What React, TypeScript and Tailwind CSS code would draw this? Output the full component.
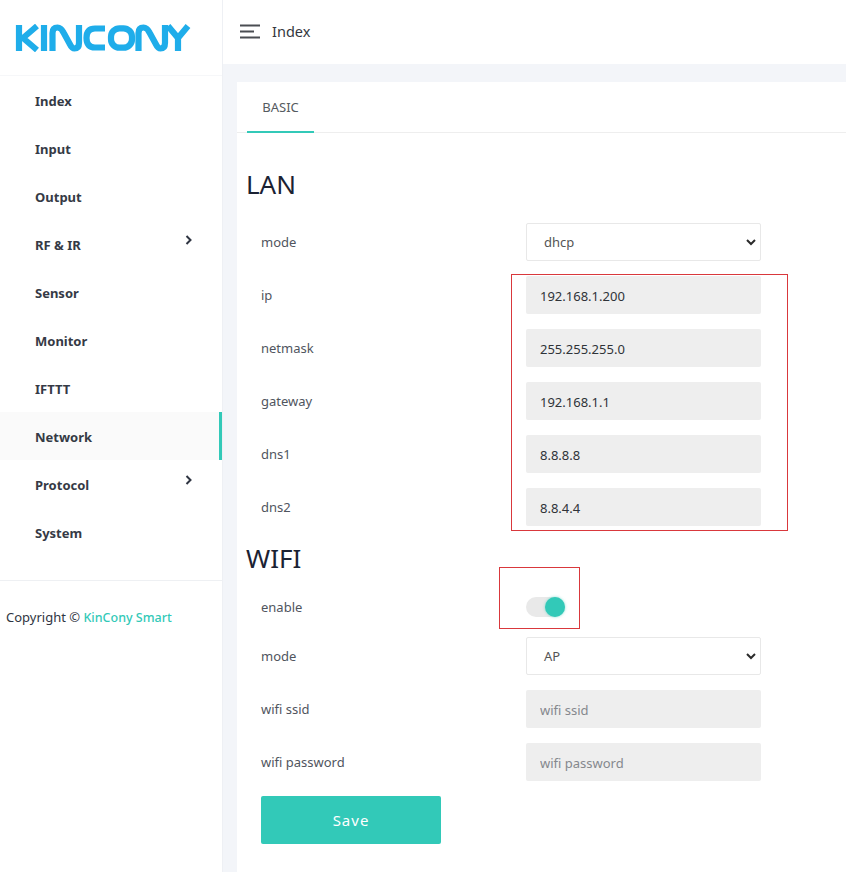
const font = "font-['Noto_Sans','Open_Sans',sans-serif]";

function Logo() {
  return (
    <svg width="176" height="28" viewBox="0 0 176 28" fill="none" stroke="#1fadea" strokeWidth="6.200" strokeLinecap="butt" strokeLinejoin="round">
      <path d="M4 1v26" />
      <path d="M22 2 8 14l14 12" strokeWidth="6" />
      <path d="M29 1v26" />
      <path d="M37.500 27V9q0-5.500 5-5.500c3 0 4.500 2 6 5l6 11c1.500 3 3 5 5 5q4.500 0 4.500-5.500V1" />
      <path d="M90 4.500H80q-8.500 0-8.500 9.500t8.500 9.500h10" />
      <rect x="96" y="4.300" width="21" height="19.400" rx="8.500" />
      <path d="M123.500 27V9q0-5.500 5-5.500c3 0 4.500 2 6 5l6 11c1.500 3 3 5 5 5q4.500 0 4.500-5.500V1" />
      <path d="M153 2l10 12 10-12M163 13v14" />
    </svg>
  );
}

function Chevron() {
  return (
    <svg width="8" height="10" viewBox="0 0 8 10" fill="none" stroke="#2f3542" strokeWidth="2" className="mt-[-9px] mr-[29px]">
      <path d="M1.500 1l4 4-4 4" />
    </svg>
  );
}

const nav = ["Index", "Input", "Output", "RF & IR", "Sensor", "Monitor", "IFTTT", "Network", "Protocol", "System"];

function Sidebar() {
  return (
    <aside className="w-[223px] shrink-0 bg-white border-r border-[#eef0f4] min-h-[872px]">
      <div className="h-[76px] border-b border-[#f6f7f9] pl-[15px] pt-[24px]">
        <Logo />
      </div>
      <nav className="pb-[24px] border-b border-[#eef0f3]">
        {nav.map((n) => {
          const active = n === "Network";
          const sub = n === "RF & IR" || n === "Protocol";
          return (
            <div key={n} className={`h-[48px] pl-[35px] flex items-center justify-between text-[13px] font-bold text-[#353a45] ${active ? "bg-[#fafafa] border-r-[3px] border-[#32c9b8]" : ""}`}>
              <span className="pt-[4px]">{n}</span>
              {sub && <Chevron />}
            </div>
          );
        })}
      </nav>
      <p className="pl-[6px] pt-[27px] text-[13px] leading-[18px] text-[#2f3542]">
        Copyright © <span className="text-[#32c9b8] font-medium text-[12.500px]">KinCony Smart</span>
      </p>
    </aside>
  );
}

function Label({ children }: { children: React.ReactNode }) {
  return <span className="w-[280px] shrink-0 pl-[15px] pt-[2px] text-[13px] text-[#50555e]">{children}</span>;
}

function Row({ label, children }: { label: string; children: React.ReactNode }) {
  return (
    <div className="flex items-center h-[53px]">
      <Label>{label}</Label>
      {children}
    </div>
  );
}

function Field({ value, placeholder }: { value?: string; placeholder?: string }) {
  return (
    <input
      readOnly
      value={value}
      placeholder={placeholder}
      className="w-[235px] h-[38px] rounded-[2px] bg-[#eeeeee] pl-[14px] pt-[2px] text-[13px] text-[#2f3338] placeholder:text-[#85888d] outline-none"
    />
  );
}

function Select({ value }: { value: string }) {
  return (
    <div className="relative w-[235px] h-[38px] rounded-[2px] border border-[#e8e8e8] bg-white flex items-center pl-[17px] pt-[2px] text-[13px] text-[#555]">
      {value}
      <svg width="10" height="7" viewBox="0 0 10 7" fill="none" stroke="#2b2b2b" strokeWidth="2" className="absolute right-[4px] top-[15px]">
        <path d="M1 1l4 4 4-4" />
      </svg>
    </div>
  );
}

export default function App() {
  return (
    <div className={`${font} relative flex h-[872px] w-[846px] overflow-hidden bg-[#f3f5f9]`}>
      <Sidebar />
      <main className="flex-1 min-w-0">
        <header className="h-[64px] bg-white flex items-center pl-[17px] gap-[12px]">
          <svg width="20" height="15" viewBox="0 0 20 15" stroke="#4a4d52" strokeWidth="2" className="mt-[-2px]">
            <path d="M0 1.500h20M0 7.500h14M0 13.500h20" />
          </svg>
          <span className="text-[14.500px] text-[#33373d] mt-[-1px]">Index</span>
        </header>
        <section className="ml-[14px] mt-[18px] bg-white h-[800px]">
          <div className="h-[51px] border-b border-[#eeeeee] pl-[10px]">
            <div className="w-[67px] h-[51px] border-b-2 border-[#32c9b8] flex justify-center items-center pt-[2px] text-[13px] text-[#555a60]">BASIC</div>
          </div>
          <div className="pl-[9px]">
            <h2 className="text-[26px] leading-[34px] text-[#1b2233] mt-[34px] mb-[22px]">LAN</h2>
            <div className="flex items-center h-[38px] mb-[7px]">
              <Label>mode</Label>
              <Select value="dhcp" />
            </div>
            <Row label="ip"><Field value="192.168.1.200" /></Row>
            <Row label="netmask"><Field value="255.255.255.0" /></Row>
            <Row label="gateway"><Field value="192.168.1.1" /></Row>
            <Row label="dns1"><Field value="8.8.8.8" /></Row>
            <Row label="dns2"><Field value="8.8.4.4" /></Row>
            <h2 className="text-[26px] leading-[34px] text-[#1b2233] mt-[8px]">WIFI</h2>
            <div className="flex items-center h-[20px] mt-[22px] mb-[20px]">
              <Label>enable</Label>
              <div className="relative w-[39px] h-[20px] rounded-full bg-[#e9e9e9]">
                <div className="absolute right-0 top-0 w-[20px] h-[20px] rounded-full bg-[#32c9b8] shadow-[0_0_3px_rgba(50,201,184,0.6)]" />
              </div>
            </div>
            <div className="flex items-center h-[38px] mb-[7px]">
              <Label>mode</Label>
              <Select value="AP" />
            </div>
            <Row label="wifi ssid"><Field placeholder="wifi ssid" /></Row>
            <Row label="wifi password"><Field placeholder="wifi password" /></Row>
            <button className="ml-[15px] mt-[8px] w-[180px] h-[48px] rounded-[2px] bg-[#32c9b8] text-white text-[15px] tracking-[1px]">Save</button>
          </div>
        </section>
      </main>
      <div className="absolute left-[511px] top-[274px] w-[277px] h-[257px] border border-[#d9383c]" />
      <div className="absolute left-[499px] top-[567px] w-[81px] h-[62px] border border-[#d9383c]" />
    </div>
  );
}
